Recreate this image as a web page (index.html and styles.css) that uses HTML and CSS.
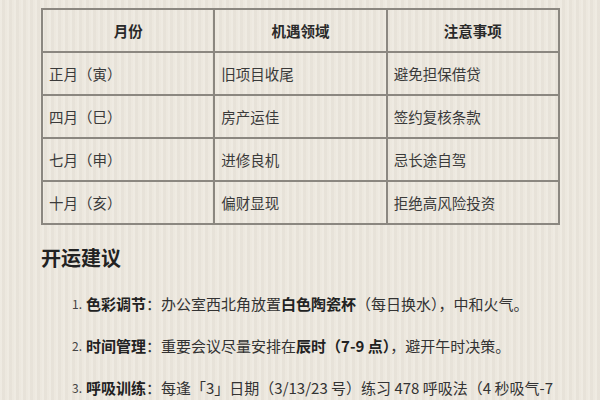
FILE: index.html
```html
<!DOCTYPE html>
<html lang="zh-CN">
<head>
<meta charset="utf-8">
<link rel="stylesheet" href="styles.css">
</head>
<body>
<div class="page">
  <table class="grid">
    <thead>
      <tr><th>月份</th><th>机遇领域</th><th>注意事项</th></tr>
    </thead>
    <tbody>
      <tr><td>正月（寅）</td><td>旧项目收尾</td><td>避免担保借贷</td></tr>
      <tr><td>四月（巳）</td><td>房产运佳</td><td>签约复核条款</td></tr>
      <tr><td>七月（申）</td><td>进修良机</td><td>忌长途自驾</td></tr>
      <tr><td>十月（亥）</td><td>偏财显现</td><td>拒绝高风险投资</td></tr>
    </tbody>
  </table>
  <h2 class="title">开运建议</h2>
  <ol class="tips">
    <li><span class="num">1.</span><span class="body"><b>色彩调节</b>：办公室西北角放置<b>白色陶瓷杯</b>（每日换水），中和火气。</span></li>
    <li><span class="num">2.</span><span class="body"><b>时间管理</b>：重要会议尽量安排在<b>辰时（7-9 点）</b>，避开午时决策。</span></li>
    <li><span class="num">3.</span><span class="body"><b>呼吸训练</b>：每逢「3」日期（3/13/23 号）练习 478 呼吸法（4 秒吸气-7 秒屏息-8 秒呼气），平复情绪。</span></li>
  </ol>
</div>
</body>
</html>
```
FILE: styles.css
```css
html, body {
  margin: 0;
  padding: 0;
}
body {
  width: 600px;
  height: 400px;
  overflow: hidden;
  background-color: #ebe6dc;
  background-image: repeating-linear-gradient(90deg,
    rgba(255,255,255,0.18) 0px, rgba(255,255,255,0.18) 2px,
    rgba(0,0,0,0.015) 2px, rgba(0,0,0,0.015) 5px,
    rgba(255,255,255,0.08) 5px, rgba(255,255,255,0.08) 7px);
  font-family: "Noto Sans CJK SC", "Noto Sans", sans-serif;
  color: #333;
}
.page {
  padding: 8px 41px 0 41px;
}
.grid {
  width: 519px;
  border-collapse: collapse;
  table-layout: fixed;
  font-size: 14.5px;
}
.grid th, .grid td {
  border: 2px solid #8b8780;
  height: 41px;
  padding: 0 0 0 6px;
  line-height: 20px;
  vertical-align: middle;
}
.grid th {
  text-align: center;
  font-weight: 700;
  color: #2a2a2a;
  padding: 0;
}
.grid td {
  text-align: left;
  color: #3a3a3a;
}
.title {
  margin: 18px 0 0 0;
  font-size: 20px;
  line-height: 30px;
  font-weight: 700;
  color: #222;
}
.tips {
  list-style: none;
  margin: 19px 0 0 0;
  padding: 0 0 0 31px;
  font-size: 15px;
  line-height: 24px;
  color: #333;
}
.tips li {
  display: flex;
  margin-bottom: 18px;
}
.tips .num {
  flex: 0 0 14px;
  font-size: 12px;
  color: #444;
}
.tips .body {
  flex: 1;
  padding-right: 4px;
}
.tips b {
  font-weight: 700;
  color: #222;
}
```
